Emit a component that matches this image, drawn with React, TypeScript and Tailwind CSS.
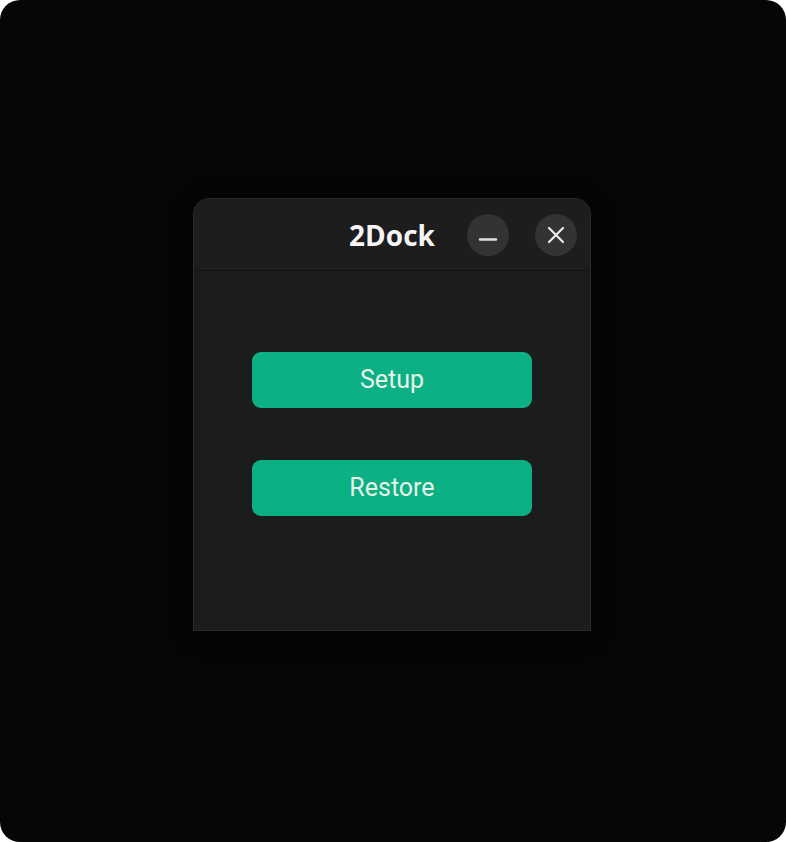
import React from 'react';

function Minimize() {
    return (
        <svg width="20" height="20" viewBox="0 0 20 20" fill="none">
            <path d="M2 14.5h16" stroke="#e2e2e2" strokeWidth="2.4" strokeLinecap="round" />
        </svg>
    );
}

function Close() {
    return (
        <svg width="18" height="18" viewBox="0 0 18 18" fill="none">
            <path d="M2 2l14 14M16 2L2 16" stroke="#ececec" strokeWidth="2.2" strokeLinecap="round" />
        </svg>
    );
}

export default function App() {
    return (
        <div className="min-h-screen bg-white">
            <div className="h-[842px] w-[786px] rounded-[20px] bg-[#050607] pt-[198px] pl-[193px]">
                {/* Window */}
                <div className="w-[398px] h-[433px] rounded-t-[16px] bg-[#1b1c1c] border border-[#2a2b2b] shadow-[0_4px_24px_rgba(0,0,0,0.6)] flex flex-col overflow-hidden">
                    {/* Header */}
                    <div className="relative h-[72px] shrink-0 bg-[#1d1d1d] border-b border-[#111212] flex items-center justify-center">
                        <span className="text-[28px] font-bold text-[#f4f4f4] leading-none" style={{ fontFamily: '"Open Sans", "Noto Sans", sans-serif' }}>
                            2Dock
                        </span>
                        <div className="absolute right-[13px] top-[15px] flex items-center gap-[26px]">
                            <button className="h-[42px] w-[42px] rounded-full bg-[#333333] flex items-center justify-center">
                                <Minimize />
                            </button>
                            <button className="h-[42px] w-[42px] rounded-full bg-[#333333] flex items-center justify-center">
                                <Close />
                            </button>
                        </div>
                    </div>

                    {/* Body */}
                    <div className="flex-1 flex flex-col items-center pt-[81px] gap-[52px]" style={{ fontFamily: 'Roboto, "Liberation Sans", sans-serif' }}>
                        <button className="h-[56px] w-[280px] rounded-[9px] bg-[#0bb085] text-[25px] text-[#e9f0e6]">
                            Setup
                        </button>
                        <button className="h-[56px] w-[280px] rounded-[9px] bg-[#0bb085] text-[25px] text-[#e9f0e6]">
                            Restore
                        </button>
                    </div>
                </div>
            </div>
        </div>
    );
}
